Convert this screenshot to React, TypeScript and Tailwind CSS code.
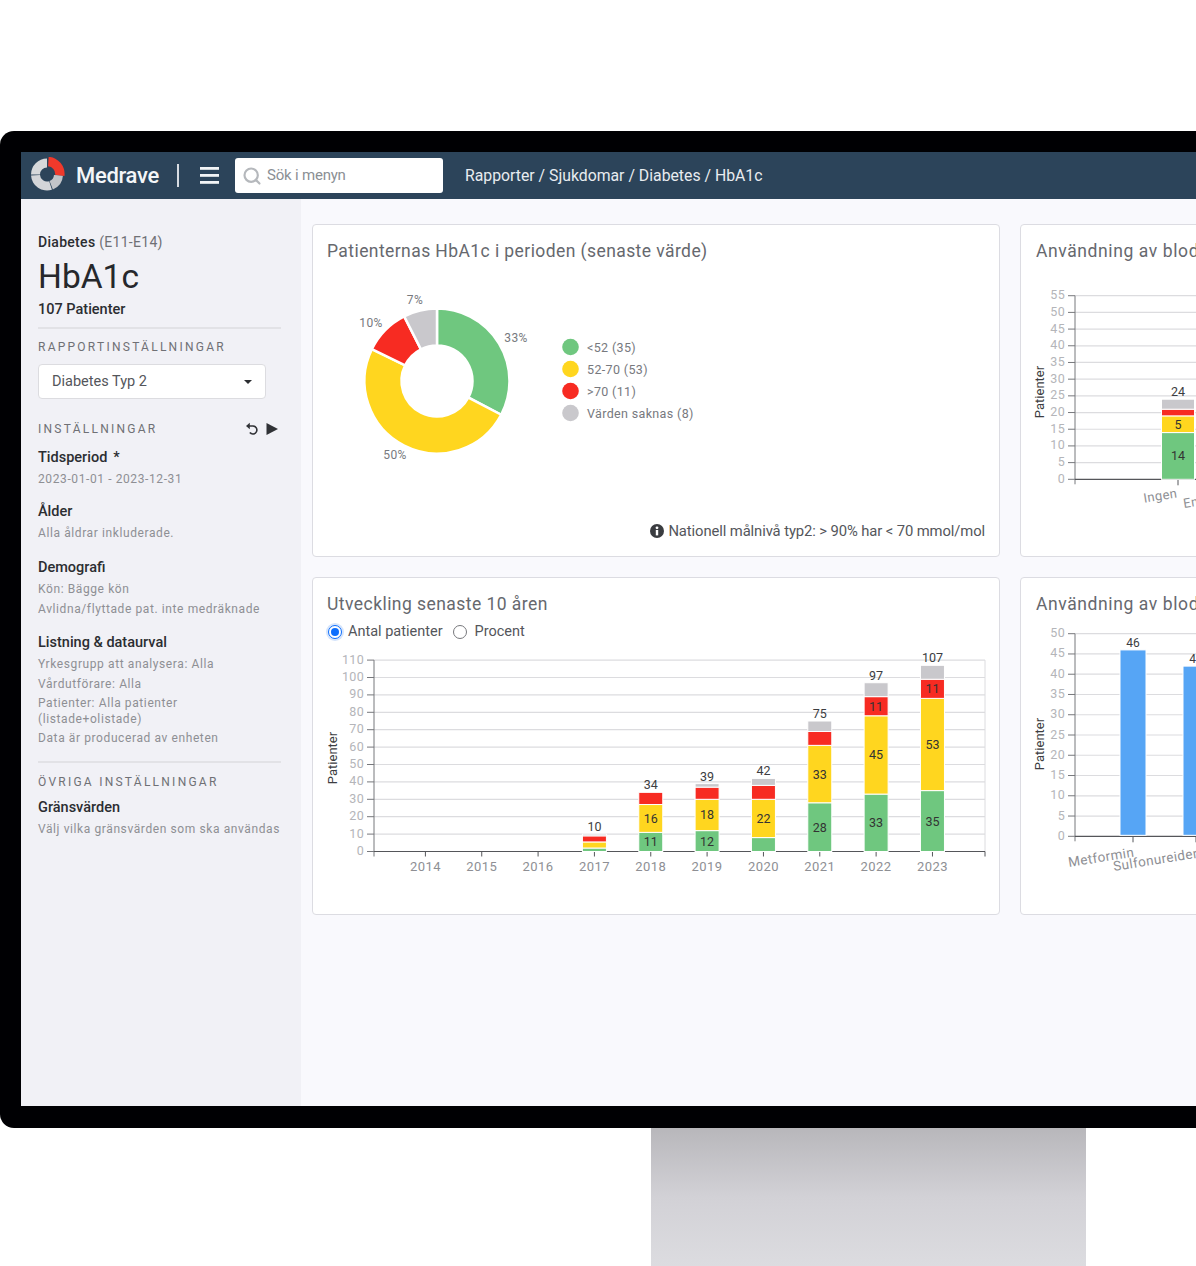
import React from 'react';
import { Search } from 'lucide-react';

const GREEN = '#6fc77f';
const YELLOW = '#ffd61f';
const RED = '#f72b22';
const GRAY = '#c9c8cc';
const FONT = 'Roboto, sans-serif';

// polar helper, angle 0 = up, clockwise
const pt = (cx: number, cy: number, r: number, turn: number) => {
  const a = turn * Math.PI * 2;
  return [cx + r * Math.sin(a), cy - r * Math.cos(a)];
};

const arcPath = (cx: number, cy: number, R: number, r: number, from: number, to: number) => {
  const [x1, y1] = pt(cx, cy, R, from);
  const [x2, y2] = pt(cx, cy, R, to);
  const [x3, y3] = pt(cx, cy, r, to);
  const [x4, y4] = pt(cx, cy, r, from);
  const large = to - from > 0.5 ? 1 : 0;
  return `M${x1} ${y1}A${R} ${R} 0 ${large} 1 ${x2} ${y2}L${x3} ${y3}A${r} ${r} 0 ${large} 0 ${x4} ${y4}Z`;
};

const Logo = () => (
  <svg width="36" height="38" viewBox="0 0 36 38">
    <path d={arcPath(17, 17.5, 16, 7, 0.26, 0.44)} fill="#c2c4c8" />
    <path d={arcPath(17, 17.5, 16, 7, 0.45, 0.74)} fill="#d3d5d8" />
    <path d={arcPath(17, 17.5, 16, 7, 0.75, 1)} fill="#d6d8da" />
    <path d={arcPath(17.6, 16.8, 17, 7.5, 0.01, 0.27)} fill="#f0392b" />
  </svg>
);

const TopBar = () => (
  <div className="flex h-[47px] shrink-0 items-center bg-[#2c445a] pl-[9px]">
    <Logo />
    <span className="ml-[10px] text-[22px] font-medium tracking-[-0.3px] text-[#f4f6f8]">Medrave</span>
    <div className="ml-[18px] h-[23px] w-[2px] bg-[#d7dce2]" />
    <svg className="ml-[21px]" width="19" height="17" viewBox="0 0 19 17" fill="#f2f4f6">
      <rect width="19" height="2.8" />
      <rect y="7" width="19" height="2.8" />
      <rect y="14" width="19" height="2.8" />
    </svg>
    <div className="ml-[16px] flex h-[35px] w-[208px] items-center rounded-[3px] bg-white pl-[7px]">
      <Search className="text-[#b5b8bc]" size={20} strokeWidth={2.6} />
      <span className="ml-[5px] text-[15px] tracking-[-0.2px] text-[#8b8f94]">Sök i menyn</span>
    </div>
    <span className="ml-[22px] whitespace-nowrap text-[15.8px] text-[#e8ecf0]">Rapporter / Sjukdomar / Diabetes / HbA1c</span>
  </div>
);

const Group = ({ title, lines, extra, className }: { title: string; lines: string[]; extra?: string; className?: string }) => (
  <div className={className}>
    <div className="mb-[2px] h-[20px] text-[14.5px] font-medium leading-[20px] text-[#2b2d31]">
      {title}
      {extra && <span className="ml-[6px]">{extra}</span>}
    </div>
    {lines.map((l, i) => (
      <div key={l} className={`${i > 0 ? 'mt-[1px]' : ''} text-[12px] leading-[19px] tracking-[0.6px] text-[#8e8f94]`}>{l}</div>
    ))}
  </div>
);

const Sidebar = () => (
  <div className="w-[280px] shrink-0 bg-[#f1f1f6] pl-[17px] pr-[19px] pt-[33px]">
    <div className="text-[14px] leading-[20px] tracking-[0.3px] text-[#6f7075]">
      <span className="font-medium text-[#2b2d31]">Diabetes</span> (E11-E14)
    </div>
    <div className="mt-[5px] text-[33.5px] leading-[40px] text-[#26282c]">HbA1c</div>
    <div className="mt-[3px] text-[14.5px] font-medium leading-[20px] text-[#2b2d31]">107 Patienter</div>
    <div className="mt-[7px] h-[2px] w-[243px] bg-[#e2e2e6]" />
    <div className="mt-[10px] text-[12px] leading-[16px] tracking-[2.25px] text-[#6f7075]">RAPPORTINSTÄLLNINGAR</div>
    <div className="mt-[9px] flex h-[35px] w-[228px] items-center justify-between rounded-[4px] border border-[#dcdce0] bg-white pl-[13px] pr-[13px]">
      <span className="text-[14.5px] text-[#54565b]">Diabetes Typ 2</span>
      <span className="h-0 w-0 border-x-[4px] border-t-[4px] border-x-transparent border-t-[#2b2d31]" />
    </div>
    <div className="mt-[22px] flex h-[16px] w-[240px] items-center justify-between">
      <span className="text-[12px] leading-[16px] tracking-[2.25px] text-[#6f7075]">INSTÄLLNINGAR</span>
      <span className="flex items-center gap-[7px]">
        <svg width="14" height="14" viewBox="0 0 14 14" fill="none">
          <path d="M3.2 4H8a4 4 0 1 1 -3.2 6.6" stroke="#303236" strokeWidth="1.6" />
          <path d="M4.8 0.8 1 4l3.8 3.2z" fill="#303236" />
        </svg>
        <svg width="12" height="12" viewBox="0 0 12 12"><path d="M0.5 0 12 6 .5 12z" fill="#303236" /></svg>
      </span>
    </div>
    <Group className="mt-[11px]" title="Tidsperiod" extra="*" lines={['2023-01-01 - 2023-12-31']} />
    <Group className="mt-[13px]" title="Ålder" lines={['Alla åldrar inkluderade.']} />
    <Group className="mt-[15px]" title="Demografi" lines={['Kön: Bägge kön', 'Avlidna/flyttade pat. inte medräknade']} />
    <Group className="mt-[14px]" title="Listning & dataurval" lines={['Yrkesgrupp att analysera: Alla', 'Vårdutförare: Alla']} />
    <div className="mt-[1px] text-[12px] leading-[16px] tracking-[0.6px] text-[#8e8f94]">
      Patienter: Alla patienter
      <br />
      (listade+olistade)
    </div>
    <div className="mt-[2px] text-[12px] leading-[19px] tracking-[0.6px] text-[#8e8f94]">Data är producerad av enheten</div>
    <div className="mt-[13px] h-[2px] w-[243px] bg-[#e2e2e6]" />
    <div className="mt-[11px] text-[12px] leading-[16px] tracking-[2.25px] text-[#6f7075]">ÖVRIGA INSTÄLLNINGAR</div>
    <Group className="mt-[8px]" title="Gränsvärden" lines={['Välj vilka gränsvärden som ska användas']} />
  </div>
);

const Card = ({ title, className, titleClassName, children }: { title: string; className: string; titleClassName: string; children: React.ReactNode }) => (
  <div className={`flex shrink-0 flex-col overflow-hidden rounded-[4px] border border-[#dcdce2] bg-white ${className}`}>
    <div className={`pt-[14px] text-[17.5px] leading-[24px] whitespace-nowrap text-[#66686e] ${titleClassName}`}>{title}</div>
    {children}
  </div>
);

const Donut = () => {
  const data = [
    { label: '<52 (35)', v: 35, c: GREEN },
    { label: '52-70 (53)', v: 53, c: YELLOW },
    { label: '>70 (11)', v: 11, c: RED },
    { label: 'Värden saknas (8)', v: 8, c: GRAY },
  ];
  let from = 0;
  return (
    <svg width="440" height="190" viewBox="0 0 440 190" className="mt-[19px] shrink-0" style={{ fontFamily: FONT }}>
      {/* coordinates below are the screenshot's own */}
      <g transform="translate(-313 -282)">
        {data.map((d) => {
          const to = from + d.v / 107;
          const p = arcPath(437, 381, 72.5, 35.5, from, to);
          from = to;
          return <path key={d.label} d={p} fill={d.c} stroke="#fff" strokeWidth="2.5" />;
        })}
        {[
          ['33%', 516, 342],
          ['50%', 395, 459],
          ['10%', 371, 327],
          ['7%', 415, 304],
        ].map(([t, x, y]) => (
          <text key={t} x={x} y={y} textAnchor="middle" fontSize="12" letterSpacing="0.4" fill="#77797e">{t}</text>
        ))}
        {data.map((d, i) => (
          <g key={d.label}>
            <circle cx="570.5" cy={347 + i * 22} r="8.3" fill={d.c} />
            <text x="587" y={351.5 + i * 22} fontSize="12.5" letterSpacing="0.35" fill="#77797e">{d.label}</text>
          </g>
        ))}
      </g>
    </svg>
  );
};

const TREND = [
  { y: 2017, total: 10, s: [2, 3.5, 3.5, 1], show: false },
  { y: 2018, total: 34, s: [11, 16, 7, 0], show: true },
  { y: 2019, total: 39, s: [12, 18, 7, 2], show: true },
  { y: 2020, total: 42, s: [8, 22, 8, 4], show: true },
  { y: 2021, total: 75, s: [28, 33, 8, 6], show: true },
  { y: 2022, total: 97, s: [33, 45, 11, 8], show: true },
  { y: 2023, total: 107, s: [35, 53, 11, 8], show: true },
];

const COLORS = [GREEN, YELLOW, RED, GRAY];

const Stack = ({ cx, w, base, unit, s, total, show }: { cx: number; w: number; base: number; unit: number; s: number[]; total: number; show: (v: number) => boolean }) => {
  let cur = base;
  return (
    <g>
      {s.map((v, i) => {
        const h = v * unit;
        const y = cur - h;
        cur = y;
        if (!v) return null;
        return (
          <g key={i}>
            <rect x={cx - w / 2} y={y} width={w} height={h} fill={COLORS[i]} stroke="#fff" strokeWidth="1" />
            {show(v) && i < 3 && (
              <text x={cx} y={y + h / 2 + 4.5} textAnchor="middle" fontSize="12.5" fill="#333">{v}</text>
            )}
          </g>
        );
      })}
      <text x={cx} y={cur - 3} textAnchor="middle" fontSize="12.5" fill="#3c3d41">{total}</text>
    </g>
  );
};

const TrendChart = () => {
  const base = 851.5;
  const unit = 1.74;
  const left = 374;
  const tickX = (year: number) => 425.4 + (year - 2014) * 56.34;
  return (
    <svg width="688" height="270" viewBox="0 0 688 270" className="mt-[2px] shrink-0" style={{ fontFamily: FONT }}>
      <g transform="translate(-313 -644)">
        {Array.from({ length: 12 }, (_, i) => i * 10).map((v) => {
          const y = base - v * unit;
          return (
            <g key={v}>
              {v > 0 && <line x1={left} x2="985" y1={y} y2={y} stroke="#dcdcdf" strokeWidth="1.2" />}
              <line x1={left - 7} x2={left} y1={y} y2={y} stroke="#77787c" />
              <text x={left - 10} y={y + 3.5} textAnchor="end" fontSize="12.5" letterSpacing="0.3" fill="#b4b5b9">{v}</text>
            </g>
          );
        })}
        <line x1="985" x2="985" y1={base - 191.4} y2={base} stroke="#dcdcdf" />
        <line x1={left} x2={left} y1={base - 191.4} y2={base + 5} stroke="#77787c" />
        <line x1={left} x2="985" y1={base} y2={base} stroke="#55565a" strokeWidth="1.2" />
        <line x1="985" x2="985" y1={base} y2={base + 5} stroke="#55565a" />
        {Array.from({ length: 10 }, (_, i) => 2014 + i).map((yr) => (
          <g key={yr}>
            <line x1={tickX(yr)} x2={tickX(yr)} y1={base} y2={base + 5} stroke="#55565a" />
            <text x={tickX(yr)} y={base + 19} textAnchor="middle" fontSize="13" letterSpacing="0.45" fill="#8e8f94">{yr}</text>
          </g>
        ))}
        {TREND.map((t) => (
          <Stack key={t.y} cx={tickX(t.y)} w={24} base={base} unit={unit} s={t.s} total={t.total} show={(v) => t.show && v >= 11} />
        ))}
        <text transform="translate(337 758) rotate(-90)" textAnchor="middle" fontSize="13" fill="#3c3d41">Patienter</text>
      </g>
    </svg>
  );
};

const TopRightChart = () => {
  const base = 479.3;
  const unit = 3.338;
  return (
    <svg width="176" height="270" viewBox="0 0 176 270" className="mt-[20px] shrink-0" style={{ fontFamily: FONT }}>
      <g transform="translate(-1021 -283)">
        {Array.from({ length: 12 }, (_, i) => i * 5).map((v) => {
          const y = base - v * unit;
          return (
            <g key={v}>
              {v > 0 && <line x1="1075" x2="1200" y1={y} y2={y} stroke="#dcdcdf" strokeWidth="1.2" />}
              <line x1="1068" x2="1075" y1={y} y2={y} stroke="#77787c" />
              <text x="1065" y={y + 3.5} textAnchor="end" fontSize="12.5" letterSpacing="0.3" fill="#b4b5b9">{v}</text>
            </g>
          );
        })}
        <line x1="1075" x2="1075" y1={base - 183.6} y2={base + 5} stroke="#77787c" />
        <line x1="1075" x2="1200" y1={base} y2={base} stroke="#55565a" strokeWidth="1.2" />
        <line x1="1178" x2="1178" y1={base} y2={base + 6} stroke="#55565a" />
        <Stack cx={1178} w={33} base={base} unit={unit} s={[14, 5, 2, 3]} total={24} show={(v) => v >= 5} />
        <text transform="translate(1161 500) rotate(-9)" textAnchor="middle" fontSize="13" letterSpacing="0.4" fill="#8e8f94">Ingen</text>
        <text transform="translate(1184 508) rotate(-9)" fontSize="13" letterSpacing="0.4" fill="#8e8f94">Endast</text>
        <text transform="translate(1044 392) rotate(-90)" textAnchor="middle" fontSize="13" fill="#3c3d41">Patienter</text>
      </g>
    </svg>
  );
};

const BottomRightChart = () => {
  const base = 836.3;
  const unit = 4.052;
  return (
    <svg width="176" height="270" viewBox="0 0 176 270" className="mt-[6px] shrink-0" style={{ fontFamily: FONT }}>
      <g transform="translate(-1021 -622)">
        {Array.from({ length: 11 }, (_, i) => i * 5).map((v) => {
          const y = base - v * unit;
          return (
            <g key={v}>
              {v > 0 && <line x1="1075" x2="1200" y1={y} y2={y} stroke="#dcdcdf" strokeWidth="1.2" />}
              <line x1="1068" x2="1075" y1={y} y2={y} stroke="#77787c" />
              <text x="1065" y={y + 3.5} textAnchor="end" fontSize="12.5" letterSpacing="0.3" fill="#b4b5b9">{v}</text>
            </g>
          );
        })}
        <line x1="1075" x2="1075" y1={base - 202.6} y2={base + 5} stroke="#77787c" />
        <line x1="1075" x2="1200" y1={base} y2={base} stroke="#55565a" strokeWidth="1.2" />
        {[
          [1133, 46],
          [1196, 42],
        ].map(([x, v]) => (
          <g key={v}>
            <rect x={x - 13} y={base - v * unit} width="26" height={v * unit - 1} fill="#56a5f5" stroke="#fff" strokeWidth="1" />
            <line x1={x} x2={x} y1={base} y2={base + 6} stroke="#55565a" />
            <text x={x} y={base - v * unit - 3} textAnchor="middle" fontSize="12" fill="#3c3d41">{v}</text>
          </g>
        ))}
        <text transform="translate(1069 867) rotate(-9)" fontSize="13.5" letterSpacing="0.4" fill="#8e8f94">Metformin</text>
        <text transform="translate(1114 871) rotate(-9)" fontSize="13.5" letterSpacing="0.4" fill="#8e8f94">Sulfonureider</text>
        <text transform="translate(1044 744) rotate(-90)" textAnchor="middle" fontSize="13" fill="#3c3d41">Patienter</text>
      </g>
    </svg>
  );
};

const Radio = ({ on }: { on?: boolean }) => (
  <span className={`flex h-[14px] w-[14px] items-center justify-center rounded-full border ${on ? 'border-[#0d6efd] shadow-[0_0_0_2px_#d5e4fb]' : 'border-[#77787c]'} bg-white`}>
    {on && <span className="h-[8px] w-[8px] rounded-full bg-[#0d6efd]" />}
  </span>
);

const Main = () => (
  <div className="flex min-w-0 flex-1 flex-col gap-[20px] overflow-hidden bg-[#f9f9fd] pl-[11px] pt-[25px]">
    <div className="flex gap-[20px]">
      <Card title="Patienternas HbA1c i perioden (senaste värde)" titleClassName="pl-[14px] tracking-[0.42px]" className="h-[333px] w-[688px]">
        <Donut />
        <div className="mb-[15px] mr-[14px] mt-auto flex items-center gap-[4px] self-end text-[14.8px] leading-[20px] tracking-[-0.1px] text-[#54565b]">
          <svg width="14" height="14" viewBox="0 0 14 14">
            <circle cx="7" cy="7" r="7" fill="#3a3c40" />
            <circle cx="7" cy="3.8" r="1.4" fill="#fff" />
            <rect x="5.8" y="6" width="2.4" height="5.4" fill="#fff" />
          </svg>
          Nationell målnivå typ2: &gt; 90% har &lt; 70 mmol/mol
        </div>
      </Card>
      <Card title="Användning av blodglukossänkande" titleClassName="pl-[15px] tracking-[0.6px]" className="h-[333px] w-[400px]">
        <TopRightChart />
      </Card>
    </div>
    <div className="flex gap-[20px]">
      <Card title="Utveckling senaste 10 åren" titleClassName="pl-[14px] tracking-[0.45px]" className="h-[338px] w-[688px]">
        <div className="mt-[6px] flex items-center pl-[15px] text-[14.5px] leading-[20px] text-[#54565b]">
          <Radio on />
          <span className="ml-[6px]">Antal patienter</span>
          <span className="ml-[10px]"><Radio /></span>
          <span className="ml-[8px]">Procent</span>
        </div>
        <TrendChart />
      </Card>
      <Card title="Användning av blodglukossänkande" titleClassName="pl-[15px] tracking-[0.6px]" className="h-[338px] w-[400px]">
        <BottomRightChart />
      </Card>
    </div>
  </div>
);

export default function App() {
  return (
    <div className="flex h-[1266px] w-[1196px] flex-col overflow-hidden bg-white pt-[131px]" style={{ fontFamily: FONT }}>
      <div className="flex h-[997px] w-[1300px] shrink-0 flex-col rounded-l-[14px] bg-[#000003] pb-[22px] pl-[21px] pt-[21px]">
        <TopBar />
        <div className="flex min-h-0 flex-1">
          <Sidebar />
          <Main />
        </div>
      </div>
      <div className="ml-[651px] h-[138px] w-[435px] shrink-0 bg-gradient-to-b from-[#b8b7bb] via-[#d2d1d6] via-50% to-[#dcdce0]" />
    </div>
  );
}
